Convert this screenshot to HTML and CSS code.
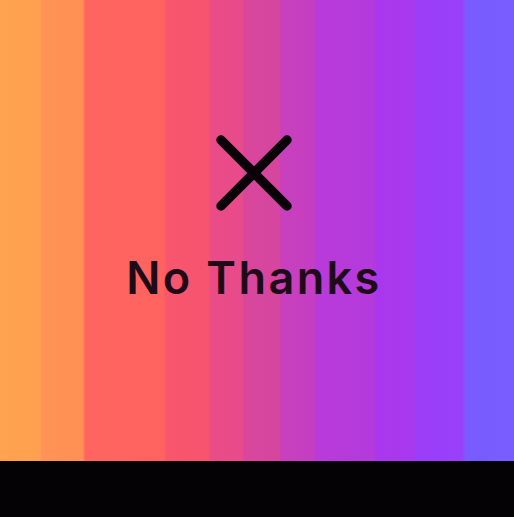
FILE: index.html
```html
<!DOCTYPE html>
<html>
<head>
<meta charset="utf-8">
<link rel="stylesheet" href="styles.css">
</head>
<body>
<main class="screen">
  <button class="dismiss">
    <svg class="close-icon" width="78" height="78" viewBox="0 0 78 78">
      <path d="M6 6 L72 72 M72 6 L6 72" stroke="#0a0208" stroke-width="9.5" stroke-linecap="round" fill="none"/>
    </svg>
    <span class="label">No Thanks</span>
  </button>
</main>
<footer class="bottom-bar"></footer>
</body>
</html>
```
FILE: styles.css
```css
html, body {
  margin: 0;
  padding: 0;
  background: #040204;
}
.screen {
  height: 461px;
  background: linear-gradient(90deg,
    #ffa34f 0px, #ffa050 40px,
    #ff9255 42px, #ff9055 83px,
    #ff6560 85px, #ff6360 164px,
    #f8566e 166px, #f6546f 209px,
    #ea4c88 211px, #e84b8a 242px,
    #d9479c 244px, #d6459e 279px,
    #c840bd 281px, #c43ec2 314px,
    #b83bd9 316px, #b43adc 374px,
    #aa37ec 376px, #a838ee 414px,
    #9a3ef8 416px, #9a40fa 462px,
    #7a5cfe 466px, #785dff 514px);
  display: flex;
  flex-direction: column;
  align-items: center;
}
.dismiss {
  margin-top: 134px;
  margin-right: 6px;
  background: none;
  border: 0;
  padding: 0;
  display: flex;
  flex-direction: column;
  align-items: center;
  gap: 43px;
  cursor: pointer;
}
.close-icon {
  display: block;
}
.label {
  font-family: Inter, "Noto Sans", sans-serif;
  font-weight: 600;
  font-size: 45px;
  line-height: 1;
  color: #1f0b18;
  letter-spacing: 2.4px;
}
.bottom-bar {
  height: 56px;
  background: #040204;
}
```
